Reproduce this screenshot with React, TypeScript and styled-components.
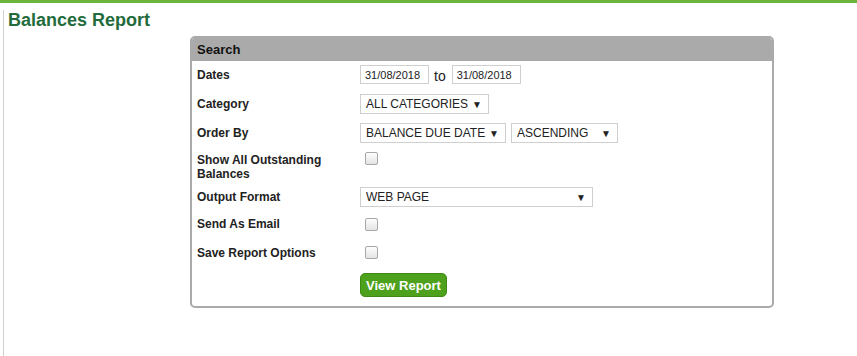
import styled, { createGlobalStyle } from 'styled-components';

const GlobalStyle = createGlobalStyle`
  body {
    margin: 0;
    background: #fff;
    font-family: "Liberation Sans", Arial, sans-serif;
    color: #222;
  }
`;

const Page = styled.div`
  border-top: 3px solid #6cb33e;
  height: 353px;
  overflow: hidden;
`;

const Frame = styled.div`
  margin-left: 3px;
  border-left: 1px solid #d0d0d0;
  padding-left: 4px;
  height: 100%;
  box-sizing: border-box;
`;

const Title = styled.h1`
  margin: 7px 0 0;
  font-size: 18px;
  line-height: 21px;
  font-weight: bold;
  color: #236b3c;
`;

const Panel = styled.div`
  margin: 5px 0 0 182px;
  width: 584px;
  box-sizing: border-box;
  border: 2px solid #aaa;
  border-radius: 5px;
  overflow: hidden;
`;

const PanelHeader = styled.div`
  height: 23px;
  background: #aaa;
  padding-left: 5px;
  display: flex;
  align-items: center;
  font-size: 13px;
  font-weight: bold;
  color: #111;
`;

const Row = styled.div<{ $h: number; $pad?: number }>`
  display: grid;
  grid-template-columns: 168px 1fr;
  height: ${({ $h }) => $h}px;
  align-items: ${({ $pad }) => ($pad !== undefined ? 'start' : 'center')};
  padding-top: ${({ $pad }) => $pad ?? 0}px;
  box-sizing: border-box;
`;

const Label = styled.div`
  padding-left: 5px;
  font-size: 12px;
  line-height: 14px;
  font-weight: bold;
  color: #222;
`;

const Field = styled.div`
  display: flex;
  align-items: center;
`;

const DateInput = styled.input`
  width: 69px;
  height: 19px;
  box-sizing: border-box;
  border: 1px solid #cfcfcf;
  padding: 0 0 0 4px;
  font-family: "Liberation Sans", Arial, sans-serif;
  font-size: 11px;
  color: #222;
  outline: none;
`;

const To = styled.span`
  font-size: 14px;
  margin: 3px 6px 0 5px;
`;

const Select = styled.div<{ $w: number }>`
  width: ${({ $w }) => $w}px;
  height: 20px;
  box-sizing: border-box;
  border: 1px solid #cfcfcf;
  padding: 0 6px 0 5px;
  margin-right: 5px;
  display: flex;
  align-items: center;
  justify-content: space-between;
  font-size: 12px;
  color: #222;
  background: #fff;
`;

const Arrow = styled.span`
  font-size: 10px;
  color: #222;
`;

const Check = styled.span<{ $top?: number }>`
  display: block;
  width: 11px;
  height: 11px;
  margin-left: 5px;
  margin-top: ${({ $top }) => $top ?? 0}px;
  border: 1px solid #a8a8a8;
  border-radius: 2px;
  background: linear-gradient(#fdfdfd, #e4e4e4);
`;

const Button = styled.button`
  width: 87px;
  height: 24px;
  border: 1px solid #3f8a14;
  border-radius: 5px;
  background: #4ea11c;
  color: #fff;
  font-family: "Liberation Sans", Arial, sans-serif;
  font-size: 13px;
  font-weight: bold;
  padding: 0;
  cursor: pointer;
`;

const Dropdown = ({ w, text }: { w: number; text: string }) => (
  <Select $w={w}>
    <span>{text}</span>
    <Arrow>▼</Arrow>
  </Select>
);

const App = () => (
  <>
    <GlobalStyle />
    <Page>
      <Frame>
        <Title>Balances Report</Title>
        <Panel>
          <PanelHeader>Search</PanelHeader>
          <Row $h={27}>
            <Label>Dates</Label>
            <Field>
              <DateInput defaultValue="31/08/2018" />
              <To>to</To>
              <DateInput defaultValue="31/08/2018" />
            </Field>
          </Row>
          <Row $h={32}>
            <Label>Category</Label>
            <Field>
              <Dropdown w={129} text="ALL CATEGORIES" />
            </Field>
          </Row>
          <Row $h={26}>
            <Label>Order By</Label>
            <Field>
              <Dropdown w={146} text="BALANCE DUE DATE" />
              <Dropdown w={107} text="ASCENDING" />
            </Field>
          </Row>
          <Row $h={37} $pad={7}>
            <Label>
              Show All Outstanding
              <br />
              Balances
            </Label>
            <Check $top={-1} />
          </Row>
          <Row $h={28}>
            <Label>Output Format</Label>
            <Field>
              <Dropdown w={233} text="WEB PAGE" />
            </Field>
          </Row>
          <Row $h={26}>
            <Label>Send As Email</Label>
            <Check />
          </Row>
          <Row $h={31}>
            <Label>Save Report Options</Label>
            <Check />
          </Row>
          <Row $h={38} $pad={5}>
            <span />
            <Field>
              <Button>View Report</Button>
            </Field>
          </Row>
        </Panel>
      </Frame>
    </Page>
  </>
);

export default App;
